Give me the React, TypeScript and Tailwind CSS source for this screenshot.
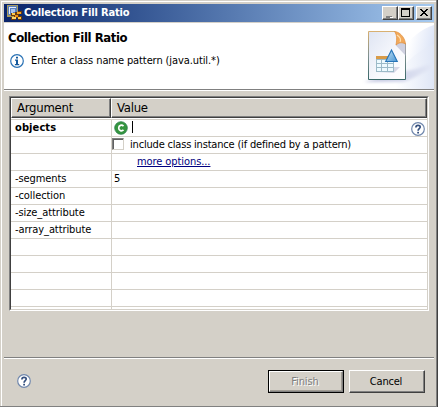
import type { ReactNode } from "react";

function HelpIcon() {
  return (
    <svg width="14" height="14" viewBox="0 0 14 14" className="block shrink-0">
      <circle cx="7" cy="7" r="6.3" fill="#fff" stroke="#7188ad" strokeWidth="1.2" />
      <path d="M4.9 5.4C4.9 2.7 9.2 2.8 9.2 5.1C9.2 6.7 7.1 6.6 7.1 8.7" fill="none" stroke="#35507f" strokeWidth="1.7" />
      <rect x="6.2" y="9.8" width="1.8" height="1.7" fill="#35507f" />
    </svg>
  );
}

function InfoIcon() {
  return (
    <svg width="14" height="14" viewBox="0 0 14 14" className="block shrink-0">
      <circle cx="7" cy="7" r="6.3" fill="#fff" stroke="#2a72b5" strokeWidth="1.2" />
      <path d="M6 2.7H8V4.4H6ZM5 5.5H8V10H9.2V11.2H4.900V10H6V6.7H5Z" fill="#14599c" />
    </svg>
  );
}

function AppIcon() {
  return (
    <svg width="16" height="16" viewBox="0 0 16 16" className="block shrink-0" shapeRendering="crispEdges">
      <rect x="0" y="0" width="11" height="12" fill="#a89a5c" />
      <rect x="1" y="1" width="9" height="9" fill="#587fc0" />
      <path d="M2 2H9V3H3V9H2Z" fill="#e7edf8" />
      <path d="M4 4H8V7H6V9H4Z" fill="#a9c3ea" />
      <path d="M4 8H8V7H11V6H15V9H12V11H15V15H11V13H9V15H4V12H7V11H4Z" fill="#6b3b0a" />
      <rect x="5" y="8" width="3" height="2" fill="#ffc94a" />
      <rect x="10" y="7" width="4" height="2" fill="#f5a623" />
      <rect x="8" y="10" width="3" height="2" fill="#e88f18" />
      <rect x="5" y="12" width="4" height="2" fill="#ffd768" />
      <rect x="11" y="12" width="3" height="2" fill="#ffc94a" />
    </svg>
  );
}

function Banner() {
  return (
    <svg width="74" height="66" viewBox="0 0 74 66" className="block shrink-0">
      <defs>
        <linearGradient id="sky" x1="0" y1="0" x2="1" y2="0.3">
          <stop offset="0.3" stopColor="#fff" />
          <stop offset="1" stopColor="#dde5f7" />
        </linearGradient>
        <linearGradient id="lower" x1="0" y1="0" x2="1" y2="0">
          <stop offset="0" stopColor="#fff" />
          <stop offset="1" stopColor="#dfe6f6" />
        </linearGradient>
        <linearGradient id="low" x1="0" y1="0" x2="1" y2="0">
          <stop offset="0" stopColor="#bfc2dd" />
          <stop offset="1" stopColor="#e3e8f6" />
        </linearGradient>
        <linearGradient id="page" x1="0" y1="0" x2="1" y2="1">
          <stop offset="0" stopColor="#dfe5f3" />
          <stop offset="0.6" stopColor="#f8f9fd" />
          <stop offset="1" stopColor="#fff" />
        </linearGradient>
        <linearGradient id="edge" x1="0" y1="0" x2="0" y2="1">
          <stop offset="0" stopColor="#d8b071" />
          <stop offset="0.5" stopColor="#7f9090" />
          <stop offset="1" stopColor="#3a6868" />
        </linearGradient>
        <linearGradient id="tri" x1="0" y1="0" x2="1" y2="1">
          <stop offset="0" stopColor="#c3e1f6" />
          <stop offset="1" stopColor="#4b97d2" />
        </linearGradient>
        <filter id="soft" x="-20%" y="-50%" width="140%" height="200%">
          <feGaussianBlur stdDeviation="1.5" />
        </filter>
      </defs>
      <path d="M74 2C61 6 49 15 42 30V50H74Z" fill="url(#sky)" />
      <path d="M74 21C60 26 49 37 36 50V66H74Z" fill="url(#lower)" />
      <path d="M4 59L44 48C53 48 63 43 74 40V46C62 48 52 58 42 59Z" fill="url(#low)" filter="url(#soft)" />
      <path d="M8.500 8.500H35L45.500 21V56.500H8.500Z" fill="url(#page)" stroke="url(#edge)" />
      <path d="M35 9C38 12 38 18 35.500 22L46 33V22Z" fill="#a5a8c4" opacity="0.5" />
      <path d="M34.500 8.500C39 8.500 45 14 45.500 21C42 19 39 19.500 36 22C37 16 37 12 34.500 8.500Z" fill="#f2a95b" stroke="#df9140" strokeWidth="0.7" />
      <path d="M37 12C40 14 41 17 40 19" fill="none" stroke="#ffe0b0" strokeWidth="1.2" />
      <path d="M18 49L28 44H40L34 50Z" fill="#aeb0cc" opacity="0.45" />
      <rect x="16" y="36" width="18" height="13" fill="#9cbac8" />
      <rect x="16" y="33" width="13" height="3" fill="#d99b48" />
      <path d="M17 37H21V40H17ZM22 37H27V40H22ZM28 37H33V40H28ZM17 41H21V44H17ZM22 41H27V44H22ZM28 41H33V44H28ZM17 45H21V48H17ZM22 45H27V48H22ZM28 45H33V48H28Z" fill="#eefaff" />
      <path d="M31.500 27L37.300 38.500H25.700Z" fill="url(#tri)" stroke="#2674b8" strokeWidth="1.1" />
    </svg>
  );
}

const raised =
  "border border-t-white border-l-white border-r-[#404040] border-b-[#404040] bg-[#d4d0c8] shadow-[inset_-1px_-1px_0_#808080]";

function TitleButton({ children }: { children: ReactNode }) {
  return (
    <div className={`h-[14px] w-[16px] ${raised}`}>
      <svg width="14" height="12" viewBox="0 0 14 12" className="block" shapeRendering="crispEdges">
        {children}
      </svg>
    </div>
  );
}

function Row({ name, children }: { name?: ReactNode; children?: ReactNode }) {
  return (
    <div className="flex h-[17px] shrink-0 border-b border-[#d4d0c8] leading-[16px]">
      <div className="w-[101px] shrink-0 border-r border-[#d4d0c8] pl-1 tracking-[-0.08px]">{name}</div>
      <div className="flex flex-1">{children}</div>
    </div>
  );
}

export default function App() {
  return (
    <div className="h-[407px] w-[438px] overflow-hidden border-r border-r-[#404040] bg-[#d4d0c8] font-['DejaVu_Sans_Condensed','DejaVu_Sans',sans-serif] text-[11px] whitespace-nowrap text-black">
      <div className="flex h-full flex-col border-r border-b border-[#808080] pt-px">
        <div className="ml-px flex min-h-0 flex-1 flex-col border-t border-l border-white pt-[2px] pr-[2px] pl-[2px]">
          <div className="flex h-[18px] shrink-0 items-center bg-linear-to-r from-[#0a246a] to-[#a6caf0] pr-[2px] pl-[3px]">
            <AppIcon />
            <span className="ml-px text-[11px] leading-[18px] font-bold tracking-[-0.14px] text-white">Collection Fill Ratio</span>
            <div className="ml-auto flex">
              <TitleButton><rect x="3" y="9" width="6" height="2" fill="#808080" /><path d="M4 11H10V10" fill="#fff" /></TitleButton>
              <TitleButton><path d="M2 1H11V10H2ZM3 3V9H10V3Z" fill="#000" fillRule="evenodd" /></TitleButton>
              <div className="w-[2px]" />
              <TitleButton><path d="M3 2H5V3H6V4H8V3H9V2H11V3H10V4H9V5H8V6H9V7H10V8H11V9H9V8H8V7H6V8H5V9H3V8H4V7H5V6H6V5H5V4H4V3H3Z" fill="#000" /></TitleButton>
            </div>
          </div>

          <div className="flex h-[68px] shrink-0 justify-between border-t border-b border-t-[#d4d0c8] border-b-[#808080] bg-white">
            <div className="pt-[6px] pl-1">
              <h1 className="text-[13px] leading-[18px] font-bold tracking-[-0.43px]">Collection Fill Ratio</h1>
              <div className="mt-[6px] flex items-center pl-[2px]">
                <InfoIcon />
                <span className="ml-[7px] leading-[16px] tracking-[-0.1px]">Enter a class name pattern (java.util.*)</span>
              </div>
            </div>
            <Banner />
          </div>
          <div className="h-px shrink-0 bg-white" />

          <div className="mt-[5px] ml-[5px] h-[215px] w-[420px] shrink-0 border border-t-[#808080] border-r-white border-b-white border-l-[#808080]">
            <div className="flex h-full flex-col border border-t-[#404040] border-r-[#d4d0c8] border-b-[#d4d0c8] border-l-[#404040] bg-white">
              <div className="flex h-[20px] shrink-0 text-[13px] leading-[18px] tracking-[-0.25px]">
                <div className={`w-[100px] pl-[5px] ${raised}`}>Argument</div>
                <div className={`flex-1 pl-[5px] ${raised}`}>Value</div>
              </div>
              <div className="mt-px h-px shrink-0 bg-[#d4d0c8]" />
              <Row name={<b className="tracking-[0.1px]">objects</b>}>
                <svg width="14" height="14" viewBox="0 0 14 14" className="mt-px ml-[2px] block">
                  <circle cx="7" cy="7" r="6.3" fill="#35953f" stroke="#2b7f4a" strokeWidth="0.8" />
                  <path d="M9.500 5.100C7.800 3.400 4.700 4.300 4.700 7C4.700 9.700 7.800 10.600 9.500 8.900" fill="none" stroke="#fff" strokeWidth="1.700" />
                </svg>
                <div className="mt-px ml-[4px] h-[12px] w-px bg-black" />
                <div className="mt-[2px] mr-[2px] ml-auto"><HelpIcon /></div>
              </Row>
              <Row>
                <div className="mt-px h-[12px] w-[12px] border border-t-[#808080] border-r-[#d4d0c8] border-b-[#d4d0c8] border-l-[#808080] bg-white shadow-[inset_1px_1px_0_#606060]" />
                <span className="ml-[6px] tracking-[-0.19px]">include class instance (if defined by a pattern)</span>
              </Row>
              <Row><a className="ml-[25px] tracking-[-0.08px] text-[#000080] underline underline-offset-1">more options...</a></Row>
              <Row name="-segments"><span className="ml-[2px]">5</span></Row>
              <Row name="-collection" />
              <Row name="-size_attribute" />
              <Row name="-array_attribute" />
              <Row /><Row /><Row /><Row />
              <div className="ml-[100px] w-px flex-1 bg-[#d4d0c8]" />
            </div>
          </div>

          <div className="mt-[46px] h-[2px] shrink-0 border-b border-white bg-[#808080]" />
          <div className="mt-[11px] mr-[9px] flex items-start">
            <div className="mt-1 ml-[13px]"><HelpIcon /></div>
            <button className="ml-auto h-[23px] w-[76px] border border-black">
              <span className="block h-[21px] border border-t-white border-r-[#808080] border-b-[#808080] border-l-white bg-[#d4d0c8] pr-[2px] leading-[19px] tracking-[-0.1px] text-[#808080] shadow-[inset_-1px_-1px_0_#a09c94] [text-shadow:1px_1px_0_white]">Finish</span>
            </button>
            <button className={`ml-[5px] h-[23px] w-[76px] pr-[2px] leading-[21px] tracking-[-0.2px] ${raised}`}>Cancel</button>
          </div>
        </div>
      </div>
    </div>
  );
}
